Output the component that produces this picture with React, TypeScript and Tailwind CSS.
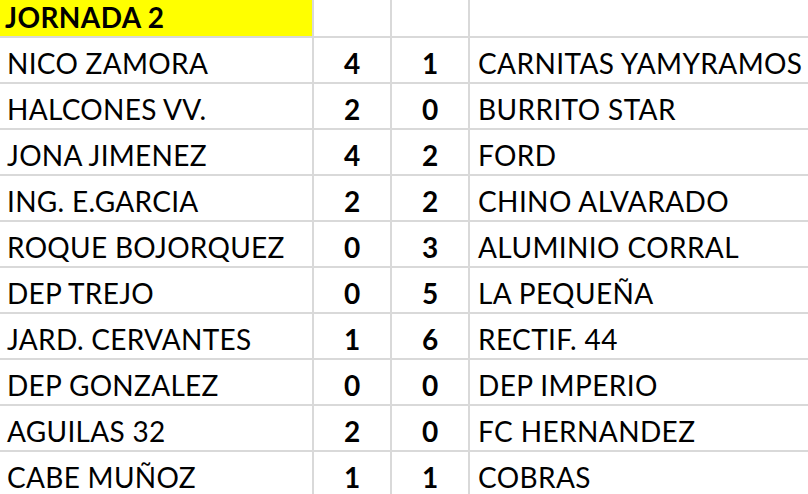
const rows: [string, number, number, string][] = [
  ["NICO ZAMORA", 4, 1, "CARNITAS YAMYRAMOS"],
  ["HALCONES VV.", 2, 0, "BURRITO STAR"],
  ["JONA JIMENEZ", 4, 2, "FORD"],
  ["ING. E.GARCIA", 2, 2, "CHINO ALVARADO"],
  ["ROQUE BOJORQUEZ", 0, 3, "ALUMINIO CORRAL"],
  ["DEP TREJO", 0, 5, "LA PEQUEÑA"],
  ["JARD. CERVANTES", 1, 6, "RECTIF. 44"],
  ["DEP GONZALEZ", 0, 0, "DEP IMPERIO"],
  ["AGUILAS 32", 2, 0, "FC HERNANDEZ"],
  ["CABE MUÑOZ", 1, 1, "COBRAS"],
];

const cell = "border-b-2 border-r-2 border-[#d9d9d9] flex items-end";

export default function App() {
  return (
    <div
      className="w-[808px] h-[494px] overflow-hidden bg-white text-black"
      style={{ fontFamily: "Lato, 'Open Sans', sans-serif" }}
    >
      <div className="grid grid-cols-[314px_78px_78px_1fr] auto-rows-[46px] grid-rows-[38px]">
        <div className={`${cell} bg-[#ffff00] pl-[5px] pb-[5px] text-[28px] font-bold leading-none tracking-[0.4px]`}>
          JORNADA 2
        </div>
        <div className={cell}></div>
        <div className={cell}></div>
        <div className="border-b-2 border-[#d9d9d9]"></div>
        {rows.map((r) => (
          <>
            <div key={r[0]} className={`${cell} pl-[7px] pb-[5px] text-[28px] leading-none tracking-[0.3px] whitespace-nowrap`}>
              {r[0]}
            </div>
            <div className={`${cell} justify-center pb-[5px] text-[28px] font-bold leading-none`}>
              {r[1]}
            </div>
            <div className={`${cell} justify-center pb-[5px] text-[28px] font-bold leading-none`}>
              {r[2]}
            </div>
            <div className="border-b-2 border-[#d9d9d9] flex items-end pl-[8px] pb-[5px] text-[28px] leading-none tracking-[0.4px] whitespace-nowrap">
              {r[3]}
            </div>
          </>
        ))}
      </div>
    </div>
  );
}
